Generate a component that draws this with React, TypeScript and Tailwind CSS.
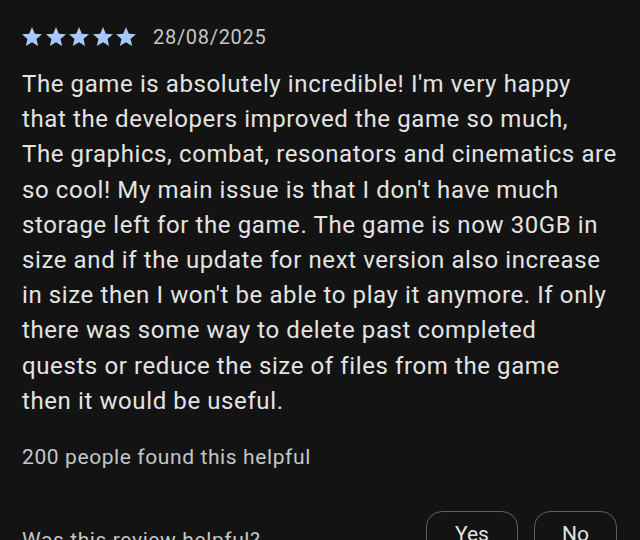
const lines = [
  "The game is absolutely incredible! I'm very happy",
  "that the developers improved the game so much,",
  "The graphics, combat, resonators and cinematics are",
  "so cool! My main issue is that I don't have much",
  "storage left for the game. The game is now 30GB in",
  "size and if the update for next version also increase",
  "in size then I won't be able to play it anymore. If only",
  "there was some way to delete past completed",
  "quests or reduce the size of files from the game",
  "then it would be useful.",
];

function StarIcon() {
  return (
    <svg viewBox="2 2 20 20" className="w-[20px] h-[20px]" fill="#a8c7fa">
      <path d="M12 17.27L18.18 21l-1.64-7.03L22 9.24l-7.19-.61L12 2 9.19 8.63 2 9.24l5.46 4.73L5.82 21z" />
    </svg>
  );
}

export default function App() {
  return (
    <div className="w-[640px] h-[540px] overflow-hidden bg-[#131313] text-[#e3e3e3] font-['Roboto',sans-serif]">
      <div className="pl-[22px] pr-[16px] pt-[26px]">
        {/* Rating + date */}
        <div className="flex items-center h-[22px]">
          <div className="flex gap-[3.5px]">
            {[0, 1, 2, 3, 4].map((i) => (
              <StarIcon key={i} />
            ))}
          </div>
          <span className="ml-[17px] text-[20px] leading-[22px] tracking-[0.7px] text-[#c4c7c5]">
            28/08/2025
          </span>
        </div>

        {/* Review body */}
        <p className="mt-[19px] text-[24px] leading-[35.2px] tracking-[0.6px]">
          {lines.map((l) => (
            <span key={l} className="block whitespace-nowrap">
              {l}
            </span>
          ))}
        </p>

        <p className="mt-[25px] text-[21px] leading-[26px] tracking-[0.6px] text-[#c4c7c5]">
          200 people found this helpful
        </p>

        {/* Feedback row */}
        <div className="mt-[41px] flex items-start justify-between pr-[7px]">
          <span className="mt-[14px] text-[21px] tracking-[0.6px] text-[#c4c7c5]">Was this review helpful?</span>
          <div className="flex gap-[16px]">
            <button className="w-[92px] h-[48px] rounded-[16px] border border-[#5e5e5e] text-[21px] text-[#e3e3e3]">
              Yes
            </button>
            <button className="w-[83px] h-[48px] rounded-[16px] border border-[#5e5e5e] text-[21px] text-[#e3e3e3]">
              No
            </button>
          </div>
        </div>
      </div>
    </div>
  );
}
